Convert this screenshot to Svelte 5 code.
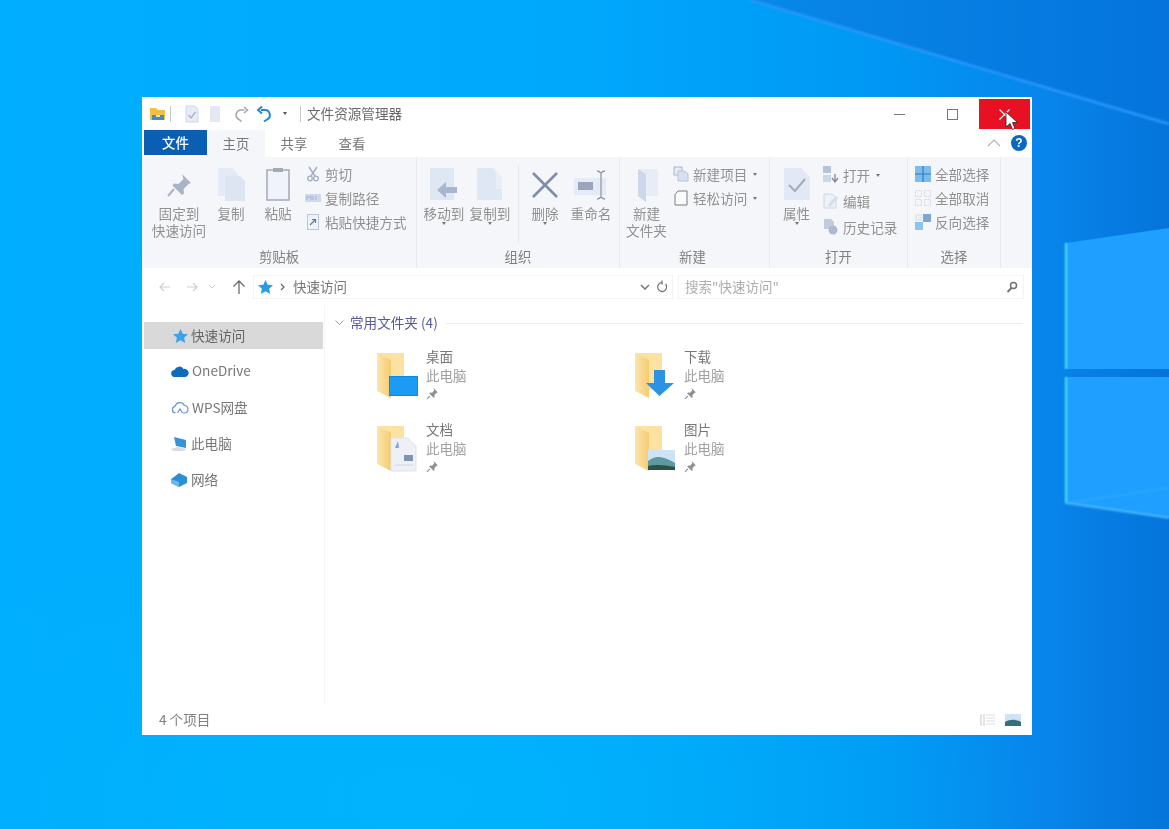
<script>
	const navRows = [
		{ name: 'onedrive', label: 'OneDrive' },
		{ name: 'wps', label: 'WPS网盘' },
		{ name: 'pc', label: '此电脑' },
		{ name: 'net', label: '网络' }
	];
	const folders = [
		{ name: '桌面', kind: 'desktop' },
		{ name: '下载', kind: 'download' },
		{ name: '文档', kind: 'docs' },
		{ name: '图片', kind: 'pics' }
	];
</script>

{#snippet pin()}
	<svg class="pin" width="13" height="13" viewBox="0 0 12 12">
		<path d="M7 1l4 4-1.2.4-2 2 .2 2-1 .6-4-4 .6-1 2 .2 2-2z" fill="#8d8f96" />
		<path d="M3.6 8.2L1 11" stroke="#8d8f96" stroke-width="1.1" />
	</svg>
{/snippet}

{#snippet folder(kind)}
	<svg width="44" height="48" viewBox="0 0 44 48">
		<defs>
			<linearGradient id="flap" x1="0" y1="0" x2="1" y2="0">
				<stop offset="0" stop-color="#fbe6ae" />
				<stop offset="1" stop-color="#f5cb70" />
			</linearGradient>
		</defs>
		<path d="M2 0h27v37H15z" fill="#fbe2a0" />
		<path d="M2 0l14 7v38L2 38z" fill="url(#flap)" />
		{#if kind === 'desktop'}
			<rect x="14.500" y="23.500" width="28" height="19" fill="#1c9bf4" stroke="#0d8ad8" />
		{:else if kind === 'download'}
			<path d="M21 17h11v13h9L26.500 43 13 30h8z" fill="#2c92e4" />
		{:else if kind === 'docs'}
			<path d="M16 12h17l8 8v25H16z" fill="#eef0f6" stroke="#e0e3ea" />
			<path d="M20 22l3-7 1 7z" fill="#7aa6e4" />
			<rect x="29" y="29" width="9" height="6" fill="#7d94b2" />
			<path d="M20 39h18" stroke="#d3d6de" />
		{:else}
			<rect x="15" y="24" width="27" height="20" fill="#cfe3f7" />
			<path d="M15 35c8-6 14-5 27 2v7H15z" fill="#5d9aa0" />
			<path d="M15 40c8-2 17-1 27 1v3H15z" fill="#2c5148" />
		{/if}
	</svg>
{/snippet}

<div class="desktop">
	<svg class="wallpaper" width="1169" height="829" viewBox="0 0 1169 829">
		<defs>
			<linearGradient id="bg" x1="0" y1="0" x2="1" y2="0">
				<stop offset="0" stop-color="#00aeff" />
				<stop offset="0.5" stop-color="#00a8fc" />
				<stop offset="0.75" stop-color="#0098f4" />
				<stop offset="0.9" stop-color="#0884ea" />
				<stop offset="1" stop-color="#0474da" />
			</linearGradient>
			<linearGradient id="wedge" x1="0" y1="0" x2="1" y2="0">
				<stop offset="0" stop-color="#0888e8" />
				<stop offset="1" stop-color="#0474dc" />
			</linearGradient>
			<radialGradient id="glow" cx="0.5" cy="0.5" r="0.5">
				<stop offset="0" stop-color="#00b6fc" stop-opacity=".8" />
				<stop offset="1" stop-color="#00b6fc" stop-opacity="0" />
			</radialGradient>
		</defs>
		<rect width="1169" height="829" fill="url(#bg)" />
		<ellipse cx="420" cy="800" rx="620" ry="300" fill="url(#glow)" />
		<path d="M750 0h419v124z" fill="url(#wedge)" />
		<path class="soft" d="M750 0L1169 124" stroke="#2a98fc" stroke-width="2.500" />
		<path d="M1066 243l103-15v141h-103zM1066 377h103v141l-103-15z" fill="#1f9fff" />
		<path class="soft" d="M1066 243v126M1066 377v126" stroke="#4fe6ff" stroke-width="2" />
		<path class="soft" d="M1066 503l103 15" stroke="#5fc8ff" stroke-width="1.500" />
		<path class="soft" d="M1066 503l103-15" stroke="#3aaeff" stroke-width="1" />
	</svg>

	<div class="window">
		<div class="titlebar">
			<svg width="18" height="16" viewBox="0 0 18 16">
				<path d="M1 2h6l2 2h7v10H1z" fill="#f3c042" />
				<path d="M3 9h12v5H3z" fill="#3a8fd0" />
				<path d="M7 9h4v2H7z" fill="#f8e3a0" />
			</svg>
			<span class="tb-sep"></span>
			<svg class="qa first" width="14" height="18" viewBox="0 0 14 18">
				<path d="M1 1h9l3 3v13H1z" fill="#e6ecf6" stroke="#cfd7e6" />
				<path d="M3.500 10l2.500 3 4.500-6" fill="none" stroke="#aab3c4" stroke-width="1.300" />
			</svg>
			<svg class="qa doc" width="10" height="16" viewBox="0 0 10 16">
				<path d="M0 0h10v16H0z" fill="#e3e8f2" />
			</svg>
			<svg class="qa redo" width="16" height="16" viewBox="0 0 16 16">
				<path d="M10.500 4H7a5 5 0 0 0-2 9.500L7.500 15.500M10 1l3.500 3-3.500 3" fill="none" stroke="#a8a8ac" stroke-width="1.600" />
			</svg>
			<svg class="qa undo" width="16" height="17" viewBox="0 0 16 17">
				<path d="M5 5h4a5 5 0 0 1 2 9.500L8 16.500M6 1.500L2 5l4 3.500" fill="none" stroke="#1d86d8" stroke-width="1.900" />
			</svg>
			<span class="caret qa-caret"></span>
			<span class="tb-sep second"></span>
			<span class="title">文件资源管理器</span>
			<div class="winctl">
				<span class="ctl"><i class="min"></i></span>
				<span class="ctl"><i class="max"></i></span>
				<span class="ctl close">
					<svg width="11" height="11" viewBox="0 0 11 11"><path d="M.5.5l10 10M10.500.5l-10 10" stroke="#fff" stroke-width="1.100" /></svg>
				</span>
			</div>
		</div>

		<div class="tabs">
			<span class="tab file">文件</span>
			<span class="tab active">主页</span>
			<span class="tab">共享</span>
			<span class="tab">查看</span>
			<svg class="collapse" width="14" height="8" viewBox="0 0 14 8"><path d="M1 7l6-6 6 6" fill="none" stroke="#b4b4b4" stroke-width="1.200" /></svg>
			<span class="help">?</span>
		</div>

		<div class="ribbon">
			<section class="group g1">
				<div class="tools">
					<div class="big" style="width:54px">
						<svg width="32" height="32" viewBox="0 0 32 32">
							<path d="M19 5l9 9-2.500 1-5 5 .5 4.500-2 1.500-9.500-9.500 1.500-2 4.500.5 5-5z" fill="#a9b3c8" />
							<path d="M11 20l-6 7" stroke="#a9b3c8" stroke-width="2" />
						</svg>
						<span>固定到<br />快速访问</span>
					</div>
					<div class="big" style="width:50px">
						<svg width="32" height="36" viewBox="0 0 32 36">
							<path d="M3 1h14l6 6v22H3z" fill="#e4ebf6" />
							<path d="M10 9h15l5 5v20H10z" fill="#dde5f2" />
						</svg>
						<span>复制</span>
					</div>
					<div class="big" style="width:44px">
						<svg width="28" height="36" viewBox="0 0 28 36">
							<rect x="3" y="3" width="22" height="30" fill="#f0f3f9" stroke="#a3a9b8" stroke-width="1.500" />
							<path d="M9 1h10v4H9z" fill="#a3a9b8" />
						</svg>
						<span>粘贴</span>
					</div>
					<div class="smalls after-big">
						<div class="small">
							<svg width="16" height="16" viewBox="0 0 16 16">
								<path d="M4 1l6 9M12 1L6 10" stroke="#a3adc2" stroke-width="1.400" />
								<circle cx="5" cy="12.500" r="2.300" fill="none" stroke="#a3adc2" stroke-width="1.300" />
								<circle cx="11" cy="12.500" r="2.300" fill="none" stroke="#a3adc2" stroke-width="1.300" />
							</svg>
							<span>剪切</span>
						</div>
						<div class="small">
							<svg width="16" height="16" viewBox="0 0 16 16">
								<rect y="4" width="16" height="8" fill="#cfd9ec" />
								<path d="M2 10V6l2 2 2-2v4M8 6v4M11 6v4" stroke="#9fabc2" stroke-width=".8" fill="none" />
							</svg>
							<span>复制路径</span>
						</div>
						<div class="small">
							<svg width="16" height="16" viewBox="0 0 16 16">
								<rect x="2.500" y=".5" width="11" height="15" fill="#eef2f9" stroke="#bcc6d8" />
								<path d="M5 11l5-5M7 5.500h3.500V9" fill="none" stroke="#6a7286" stroke-width="1.100" />
							</svg>
							<span>粘贴快捷方式</span>
						</div>
					</div>
				</div>
				<div class="glabel">剪贴板</div>
			</section>

			<section class="group g2">
				<div class="tools">
					<div class="big" style="width:46px">
						<svg width="36" height="36" viewBox="0 0 36 36">
							<path d="M4 1h24v32H4z" fill="#dfe7f4" />
							<path d="M31 20H20v-5L11 23l9 8v-5h11z" fill="#a8b6cf" />
						</svg>
						<span>移动到</span>
						<span class="caret under"></span>
					</div>
					<div class="big" style="width:46px">
						<svg width="36" height="36" viewBox="0 0 36 36">
							<path d="M5 1h16l9 9v23H5z" fill="#dfe7f4" />
							<path d="M21 1l9 9v12h-6V7z" fill="#e9eef7" />
						</svg>
						<span>复制到</span>
						<span class="caret under"></span>
					</div>
					<span class="vline"></span>
					<div class="big" style="width:52px">
						<svg width="36" height="36" viewBox="0 0 36 36">
							<path d="M6 6l24 24M30 6L6 30" stroke="#7f8cab" stroke-width="2.600" />
						</svg>
						<span>删除</span>
						<span class="caret under"></span>
					</div>
					<div class="big" style="width:40px">
						<svg width="36" height="36" viewBox="0 0 36 36">
							<rect x="1" y="11" width="32" height="17" fill="#e4ebf6" />
							<rect x="5" y="15" width="15" height="8" fill="#9aa5bb" />
							<path d="M24 4c2 0 3 1 4 2 1-1 2-2 4-2M28 6v24M24 32c2 0 3-1 4-2 1 1 2 2 4 2" fill="none" stroke="#9099ac" stroke-width="1.300" />
						</svg>
						<span>重命名</span>
					</div>
				</div>
				<div class="glabel">组织</div>
			</section>

			<section class="group g3">
				<div class="tools">
					<div class="big" style="width:53px">
						<svg width="30" height="36" viewBox="0 0 30 36">
							<path d="M6 2h20v27H10z" fill="#e7edf7" />
							<path d="M6 2l8 5v28l-8-6z" fill="#ccd7e9" />
						</svg>
						<span>新建<br />文件夹</span>
					</div>
					<div class="smalls">
						<div class="small">
							<svg width="16" height="16" viewBox="0 0 16 16">
								<rect x="1" y="1" width="8" height="8" fill="#e6ebf4" stroke="#adb6c8" />
								<path d="M5 5h7l3 3v7H5z" fill="#d7e0f0" stroke="#b9c4da" />
							</svg>
							<span>新建项目</span>
							<span class="caret"></span>
						</div>
						<div class="small">
							<svg width="16" height="16" viewBox="0 0 16 16">
								<path d="M2 4.500L5 1h9v14H2z" fill="#fafafb" stroke="#777c88" />
							</svg>
							<span>轻松访问</span>
							<span class="caret"></span>
						</div>
					</div>
				</div>
				<div class="glabel offset">新建</div>
			</section>

			<section class="group g4">
				<div class="tools">
					<div class="big" style="width:53px">
						<svg width="28" height="36" viewBox="0 0 28 36">
							<path d="M1 1h17l9 9v23H1z" fill="#e2e9f5" />
							<path d="M6 18l6 6 10-12" fill="none" stroke="#a2abbf" stroke-width="2" />
						</svg>
						<span>属性</span>
						<span class="caret under"></span>
					</div>
					<div class="smalls wide">
						<div class="small">
							<svg width="16" height="18" viewBox="0 0 16 18">
								<rect x="0" y="0" width="8" height="7" fill="#b7c3d6" />
								<rect x="0" y="9" width="8" height="7" fill="#cdd6e5" />
								<path d="M12 8v7M9 12l3 4 3-4" fill="none" stroke="#7f8798" stroke-width="1.300" />
							</svg>
							<span>打开</span>
							<span class="caret"></span>
						</div>
						<div class="small">
							<svg width="16" height="16" viewBox="0 0 16 16">
								<path d="M1 1h8l4 4v10H1z" fill="#edf1f8" stroke="#cfd6e4" />
								<path d="M5 12l8-9 2 2-8 9z" fill="#d5dcea" />
							</svg>
							<span>编辑</span>
						</div>
						<div class="small">
							<svg width="16" height="16" viewBox="0 0 16 16">
								<path d="M1 0h7l3 3v7H1z" fill="#c2ccdd" />
								<circle cx="10" cy="11" r="4.500" fill="#aeb9cd" />
							</svg>
							<span>历史记录</span>
						</div>
					</div>
				</div>
				<div class="glabel">打开</div>
			</section>

			<section class="group g5">
				<div class="tools">
					<div class="smalls">
						<div class="small">
							<svg width="16" height="16" viewBox="0 0 16 16">
								<rect width="16" height="16" fill="#7dbcec" />
								<path d="M8 0v16M0 8h16" stroke="#2d7fc6" stroke-width="1.200" />
							</svg>
							<span>全部选择</span>
						</div>
						<div class="small">
							<svg width="16" height="16" viewBox="0 0 16 16">
								<path d="M.5.5h6v6h-6zM9.500.5h6v6h-6zM.5 9.500h6v6h-6zM9.500 9.500h6v6h-6z" fill="#f4f5f8" stroke="#d6d9e0" stroke-dasharray="2 1" />
							</svg>
							<span>全部取消</span>
						</div>
						<div class="small">
							<svg width="16" height="16" viewBox="0 0 16 16">
								<rect x="0" y="8" width="8" height="8" fill="#8cc4ef" />
								<rect x="8" y="0" width="8" height="8" fill="#7fa6d0" />
								<rect x="1" y="1" width="5" height="5" fill="#f0f3f8" stroke="#d8dce4" />
							</svg>
							<span>反向选择</span>
						</div>
					</div>
				</div>
				<div class="glabel">选择</div>
			</section>
		</div>

		<div class="addressbar">
			<svg class="nav" width="12" height="10" viewBox="0 0 12 10"><path d="M11 5H1M5 1L1 5l4 4" fill="none" stroke="#d0d0d0" stroke-width="1.200" /></svg>
			<svg class="nav fwd" width="12" height="10" viewBox="0 0 12 10"><path d="M1 5h10M7 1l4 4-4 4" fill="none" stroke="#d0d0d0" stroke-width="1.200" /></svg>
			<svg class="nav dn" width="8" height="5" viewBox="0 0 8 5"><path d="M1 1l3 3 3-3" fill="none" stroke="#d4d4d4" /></svg>
			<svg class="nav up" width="14" height="16" viewBox="0 0 14 16"><path d="M7 15V2M1.500 7.500L7 2l5.500 5.500" fill="none" stroke="#6c6c6c" stroke-width="1.300" /></svg>
			<div class="address">
				<svg width="15" height="14" viewBox="0 0 15 14"><path d="M7.500 0l2.200 4.700 5.300.6-3.900 3.500 1.100 5.200-4.700-2.700L2.800 14l1.100-5.200L0 5.300l5.300-.6z" fill="#2a9be8" /></svg>
				<svg class="crumb" width="6" height="8" viewBox="0 0 6 8"><path d="M1 1l3 3-3 3" fill="none" stroke="#666" stroke-width="1.200" /></svg>
				<span class="path">快速访问</span>
				<svg class="drop" width="10" height="6" viewBox="0 0 10 6"><path d="M1 1l4 4 4-4" fill="none" stroke="#707070" stroke-width="1.400" /></svg>
				<svg class="refresh" width="12" height="13" viewBox="0 0 12 13"><path d="M9.500 4a4.500 4.500 0 1 1-3.500-1.500M6 .5v4" fill="none" stroke="#6f6f6f" stroke-width="1.200" /></svg>
			</div>
			<div class="search">
				<span>搜索"快速访问"</span>
				<svg width="12" height="12" viewBox="0 0 12 12"><circle cx="7.500" cy="4.500" r="3" fill="none" stroke="#707070" stroke-width="1.500" /><path d="M5.500 7L1.500 11" stroke="#707070" stroke-width="1.800" /></svg>
			</div>
		</div>

		<div class="content">
			<nav class="sidebar">
				<div class="navrow selected">
					<svg width="15" height="14" viewBox="0 0 15 14"><path d="M7.500 0l2.200 4.700 5.300.6-3.900 3.500 1.100 5.200-4.700-2.700L2.800 14l1.100-5.200L0 5.300l5.300-.6z" fill="#3aa3ea" /></svg>
					<span>快速访问</span>
				</div>
				{#each navRows as row}
					<div class="navrow">
						{#if row.name === 'onedrive'}
							<svg width="18" height="12" viewBox="0 0 18 12"><path d="M4 12a3.500 3.500 0 0 1-.5-7A5 5 0 0 1 12.500 4 4 4 0 0 1 14.500 12z" fill="#0f6cbd" /></svg>
						{:else if row.name === 'wps'}
							<svg width="18" height="13" viewBox="0 0 18 13"><path d="M4.500 12a3.400 3.400 0 0 1-.5-6.700A5 5 0 0 1 13.300 4.500 3.800 3.800 0 0 1 14 12h-2M6.500 12L9 8l2.500 4" fill="none" stroke="#6a93d6" stroke-width="1.200" /></svg>
						{:else if row.name === 'pc'}
							<svg width="17" height="16" viewBox="0 0 17 16"><path d="M3 1l12 3v8L5 10z" fill="#3794d6" /><path d="M0 13l6-2 10 2-4 2H2z" fill="#d9dde3" /></svg>
						{:else}
							<svg width="17" height="15" viewBox="0 0 17 15"><path d="M8 0l8 4v6l-8 4-8-4V6l3-2z" fill="#2a8fd4" /><path d="M0 6l8 3v5l-8-4z" fill="#6cb8ea" /></svg>
						{/if}
						<span>{row.label}</span>
					</div>
				{/each}
			</nav>

			<main class="files">
				<div class="grouphead">
					<svg width="9" height="6" viewBox="0 0 9 6"><path d="M.5.5l4 4 4-4" fill="none" stroke="#9a9aa8" /></svg>
					<span>常用文件夹 (4)</span>
					<i></i>
				</div>
				<div class="grid">
					{#each folders as f}
						<div class="item">
							{@render folder(f.kind)}
							<div class="meta">
								<span class="fname">{f.name}</span>
								<span>此电脑</span>
								{@render pin()}
							</div>
						</div>
					{/each}
				</div>
			</main>
		</div>

		<div class="statusbar">
			<span>4 个项目</span>
			<div class="views">
				<svg width="16" height="14" viewBox="0 0 16 14"><path d="M1 1v12M4 1v12" stroke="#c9c9c9" /><path d="M6 2h9M6 5h9M6 8h9M6 11h9" stroke="#dcdcdc" /></svg>
				<svg width="16" height="12" viewBox="0 0 16 12"><rect width="16" height="12" fill="#cfe3f5" /><path d="M0 8c5-3 10-3 16 0v4H0z" fill="#356e7c" /></svg>
			</div>
		</div>
	</div>

	<svg class="cursor" width="14" height="20" viewBox="0 0 14 20">
		<path d="M1 1v15l4-3.500 2.500 6 2.500-1-2.500-6h5z" fill="#fff" stroke="#222" stroke-width=".8" />
	</svg>
</div>

<style>
	:global(body) {
		margin: 0;
		background: #00a0fa;
		font-family: "Noto Sans CJK SC", "Noto Sans", sans-serif;
	}

	.desktop {
		position: relative;
		width: 1169px;
		height: 829px;
		overflow: hidden;
	}
	.wallpaper {
		position: absolute;
		inset: 0;
	}
	.soft { filter: blur(0.8px); }

	/* window sits on the desktop at its own spot */
	.window {
		position: absolute;
		left: 142px;
		top: 97px;
		width: 890px;
		height: 638px;
		display: flex;
		flex-direction: column;
		background: #fff;
		box-sizing: border-box;
		filter: blur(0.5px);
	}

	.titlebar {
		height: 33px;
		display: flex;
		align-items: center;
		padding-left: 7px;
		flex-shrink: 0;
	}
	.tb-sep {
		width: 1px;
		height: 16px;
		background: #c9c9c9;
		margin-left: 3px;
	}
	.tb-sep.second { margin-left: 13px; }
	.qa.first { margin-left: 14px; }
	.qa.doc { margin-left: 11px; }
	.qa.redo { margin-left: 14px; }
	.qa.undo { margin-left: 6px; }
	.qa-caret { margin-left: 11px; }
	.title {
		margin-left: 6px;
		margin-top: -2px;
		font-size: 13.6px;
		color: #6a6a6a;
	}
	.caret {
		display: inline-block;
		width: 0;
		height: 0;
		border: 2.5px solid transparent;
		border-top: 3px solid #555;
		border-bottom: 0;
	}
	.winctl {
		margin-left: auto;
		display: flex;
		align-self: flex-start;
		margin-top: 2px;
		margin-right: 2px;
	}
	.ctl {
		width: 53px;
		height: 30px;
		display: flex;
		align-items: center;
		justify-content: center;
	}
	.ctl.close {
		background: #e81123;
		width: 51px;
	}
	.min {
		width: 11px;
		height: 1px;
		background: #777;
	}
	.max {
		width: 9px;
		height: 9px;
		border: 1px solid #777;
	}

	.tabs {
		height: 27px;
		display: flex;
		align-items: stretch;
		padding-left: 2px;
		font-size: 13.4px;
		color: #777;
		flex-shrink: 0;
	}
	.tab {
		width: 58px;
		display: flex;
		align-items: center;
		justify-content: center;
		box-sizing: border-box;
		padding-bottom: 2px;
	}
	.tab.file {
		width: 63px;
		height: 25px;
		background: #0b5fb3;
		color: #fff;
		font-weight: 500;
	}
	.tab.active { background: #f5f6f9; }
	.collapse {
		margin: 9px 0 0 auto;
	}
	.help {
		width: 16px;
		height: 16px;
		margin: 5px 5px 0 10px;
		border-radius: 50%;
		background: #0a67c2;
		color: #fff;
		font: 700 12px/16px "Liberation Sans", sans-serif;
		text-align: center;
	}

	.ribbon {
		height: 111px;
		background: #f5f6f9;
		display: flex;
		flex-shrink: 0;
		padding-right: 30px;
		color: #919191;
		font-size: 13.6px;
		line-height: 17px;
	}
	.group {
		display: flex;
		flex-direction: column;
		border-right: 1px solid #e9eaee;
		box-sizing: border-box;
	}
	.g1 { width: 275px; }
	.g2 { width: 203px; }
	.g3 { width: 150px; }
	.g4 { width: 138px; }
	.g5 { width: 93px; }
	.g1 .tools { padding-left: 10px; }
	.g2 .tools { padding-left: 4px; }
	.g3 .tools { padding-left: 0; }
	.g5 .tools { padding-left: 7px; }
	.tools {
		flex: 1;
		min-height: 0;
		display: flex;
		padding-top: 8px;
	}
	.big {
		display: flex;
		flex-direction: column;
		align-items: center;
		text-align: center;
		white-space: nowrap;
		padding-top: 1px;
	}
	.big svg {
		height: 38px;
		margin-bottom: 1px;
	}
	.under {
		border-top-color: #777;
	}
	.vline {
		width: 1px;
		height: 78px;
		margin: 0 0 0 5px;
		background: #e6e7ec;
	}
	.smalls {
		display: flex;
		flex-direction: column;
		gap: 6px;
	}
	.smalls.after-big { margin-left: 5px; }
	.smalls.wide {
		gap: 8px;
		margin-top: 1px;
	}
	.small {
		display: flex;
		align-items: center;
		gap: 4px;
		height: 18px;
		white-space: nowrap;
	}
	.small .caret { margin-left: 2px; border-top-color: #777; }
	.glabel {
		height: 24px;
		text-align: center;
		color: #808080;
		font-size: 13.4px;
		line-height: 24px;
	}
	.glabel.offset { padding-right: 4px; }

	.addressbar {
		height: 37px;
		display: flex;
		align-items: center;
		padding: 0 8px 0 17px;
		flex-shrink: 0;
	}
	.nav.fwd { margin-left: 15px; }
	.nav.dn { margin-left: 10px; }
	.nav.up { margin-left: 16px; }
	.address {
		margin-left: 7px;
		width: 420px;
		height: 24px;
		display: flex;
		align-items: center;
		padding: 0 4px;
		box-sizing: border-box;
		border: 1px solid #f3f3f3;
		font-size: 13.5px;
		color: #777;
	}
	.crumb { margin-left: 7px; }
	.path {
		margin-left: 7px;
		margin-top: -1px;
	}
	.drop { margin-left: auto; }
	.refresh { margin-left: 6px; }
	.search {
		margin-left: 5px;
		flex: 1;
		height: 24px;
		display: flex;
		align-items: center;
		justify-content: space-between;
		padding: 0 5px 0 6px;
		box-sizing: border-box;
		border: 1px solid #f3f3f3;
		font-size: 13.5px;
		color: #adadad;
	}
	.search span { margin-top: -1px; }

	.content {
		flex: 1;
		display: flex;
		min-height: 0;
	}
	.sidebar {
		width: 183px;
		padding-top: 17px;
		border-right: 1px solid #f5f5f5;
		box-sizing: border-box;
		font-size: 13.6px;
		color: #777;
		flex-shrink: 0;
	}
	.navrow {
		height: 36.400px;
		display: flex;
		align-items: center;
		gap: 3px;
		padding-left: 29px;
	}
	.navrow > span { margin-top: -2px; }
	.navrow.selected {
		margin-left: 2px;
		padding-left: 29px;
		height: 27px;
		background: #d9d9d9;
		color: #666;
		margin-right: 1px;
		margin-bottom: 4px;
	}
	.files {
		flex: 1;
		padding: 8px 9px 0 10px;
		min-width: 0;
	}
	.grouphead {
		display: flex;
		align-items: center;
		gap: 6px;
		height: 20px;
		font-size: 13.6px;
		color: #565a98;
		line-height: 18px;
	}
	.grouphead span { margin-bottom: 2px; }
	.grouphead i {
		flex: 1;
		height: 1px;
		background: #ececf2;
		margin-left: 2px;
	}
	.grid {
		display: grid;
		grid-template-columns: 258px 258px;
		row-gap: 8px;
		margin: 14px 0 0 40px;
	}
	.item {
		display: flex;
		gap: 7px;
		height: 65px;
		align-items: flex-start;
	}
	.item > svg { margin-top: 6px; }
	.meta {
		display: flex;
		flex-direction: column;
		font-size: 13.5px;
		line-height: 19px;
		color: #a0a0a0;
	}
	.fname { color: #777; }
	.pin { margin-top: 2px; }

	.statusbar {
		height: 30px;
		display: flex;
		align-items: center;
		justify-content: space-between;
		padding: 0 11px 0 17px;
		font-size: 13.6px;
		color: #808080;
		flex-shrink: 0;
	}
	.statusbar > span { margin-top: -2px; }
	.views {
		display: flex;
		align-items: center;
		gap: 9px;
	}

	.cursor {
		position: absolute;
		left: 1005px;
		top: 111px;
	}
</style>
